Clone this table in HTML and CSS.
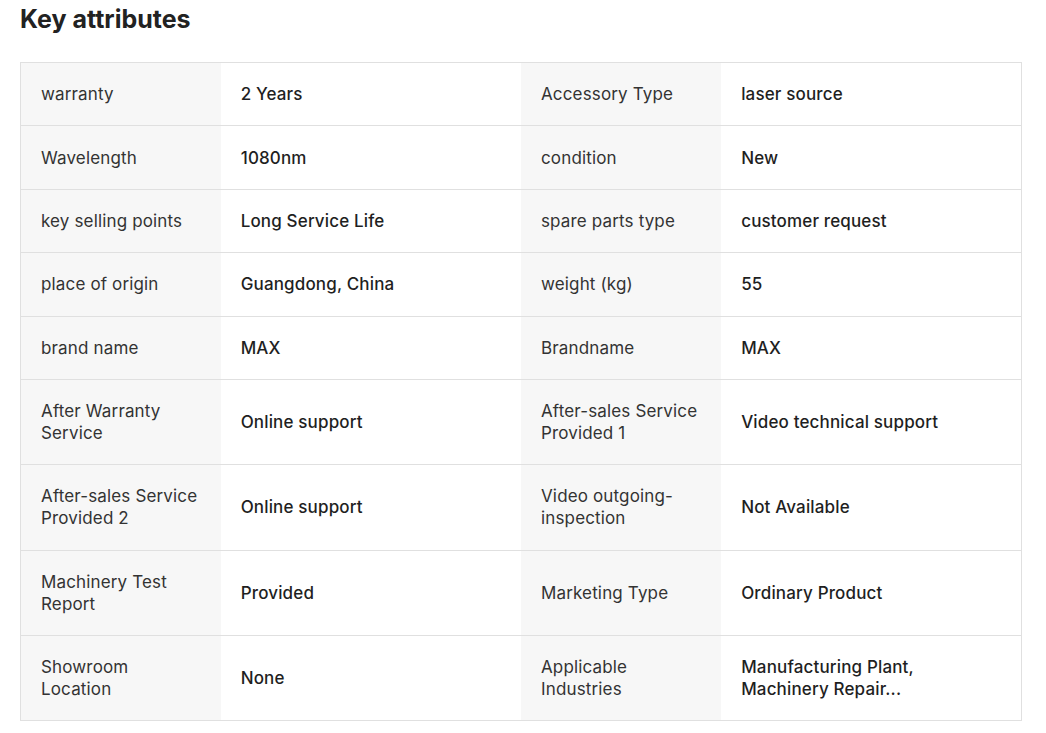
FILE: index.html
```html
<!DOCTYPE html>
<html lang="en">
<head>
<meta charset="utf-8">
<title>Key attributes</title>
<link rel="stylesheet" href="styles.css">
</head>
<body>
<section class="attrs">
  <h2 class="attrs-title">Key attributes</h2>
  <table class="attrs-table">
    <colgroup>
      <col class="c-label"><col class="c-value"><col class="c-label"><col class="c-value">
    </colgroup>
    <tbody>
      <tr><td class="lbl">warranty</td><td class="val">2 Years</td><td class="lbl">Accessory Type</td><td class="val">laser source</td></tr>
      <tr><td class="lbl">Wavelength</td><td class="val">1080nm</td><td class="lbl">condition</td><td class="val">New</td></tr>
      <tr><td class="lbl">key selling points</td><td class="val">Long Service Life</td><td class="lbl">spare parts type</td><td class="val">customer request</td></tr>
      <tr><td class="lbl">place of origin</td><td class="val">Guangdong, China</td><td class="lbl">weight (kg)</td><td class="val">55</td></tr>
      <tr><td class="lbl">brand name</td><td class="val">MAX</td><td class="lbl">Brandname</td><td class="val">MAX</td></tr>
      <tr><td class="lbl">After Warranty Service</td><td class="val">Online support</td><td class="lbl">After-sales Service Provided 1</td><td class="val">Video technical support</td></tr>
      <tr><td class="lbl">After-sales Service Provided 2</td><td class="val">Online support</td><td class="lbl">Video outgoing-inspection</td><td class="val">Not Available</td></tr>
      <tr><td class="lbl">Machinery Test Report</td><td class="val">Provided</td><td class="lbl">Marketing Type</td><td class="val">Ordinary Product</td></tr>
      <tr><td class="lbl">Showroom Location</td><td class="val">None</td><td class="lbl">Applicable Industries</td><td class="val">Manufacturing Plant, Machinery Repair...</td></tr>
    </tbody>
  </table>
</section>
</body>
</html>
```

FILE: styles.css
```css
html, body {
  margin: 0;
  padding: 0;
  background: #ffffff;
}
body {
  font-family: Inter, "Noto Sans", "Liberation Sans", sans-serif;
  color: #222222;
}
.attrs {
  padding: 0 24px 0 20px;
}
.attrs-title {
  margin: 2px 0 0;
  font-size: 25px;
  line-height: 34px;
  font-weight: 700;
  color: #222222;
}
.attrs-table {
  margin-top: 26px;
  width: 1002px;
  border-collapse: collapse;
  table-layout: fixed;
  border: 1px solid #e0e0e0;
}
.c-label { width: 200px; }
.c-value { width: 300px; }
.attrs-table tr {
  border-top: 1px solid #e0e0e0;
}
.attrs-table td {
  padding: 20.2px 20px;
  font-size: 17px;
  line-height: 22px;
  letter-spacing: 0.15px;
  vertical-align: middle;
}
.lbl {
  background: #f7f7f7;
  color: #333333;
  font-weight: 400;
}
.val {
  background: #ffffff;
  color: #1f1f1f;
  font-weight: 500;
}
```
